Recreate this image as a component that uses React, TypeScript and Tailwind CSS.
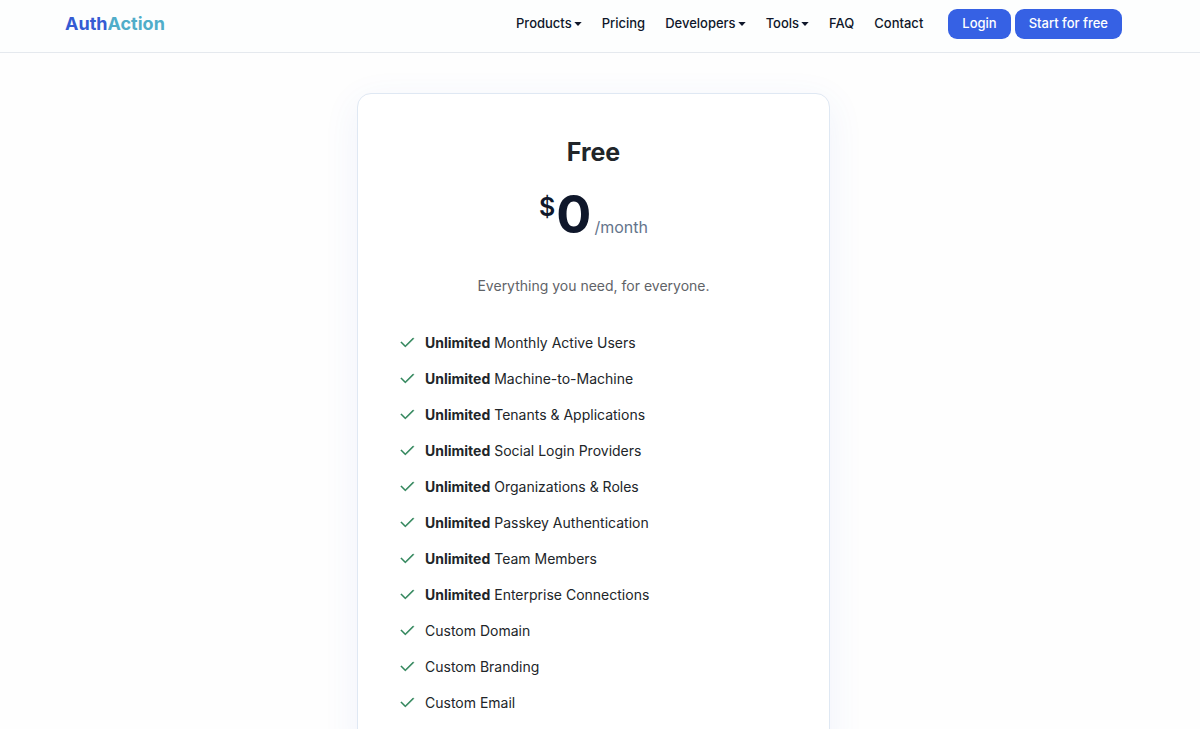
import { BsCheck2 } from "react-icons/bs";

type NavItem = {
  label: string;
  menu?: boolean;
};

type Feature = {
  text: string;
  unlimited?: boolean;
};

const navItems: NavItem[] = [
  { label: "Products", menu: true },
  { label: "Pricing" },
  { label: "Developers", menu: true },
  { label: "Tools", menu: true },
  { label: "FAQ" },
  { label: "Contact" },
];

const features: Feature[] = [
  { text: "Monthly Active Users", unlimited: true },
  { text: "Machine-to-Machine", unlimited: true },
  { text: "Tenants & Applications", unlimited: true },
  { text: "Social Login Providers", unlimited: true },
  { text: "Organizations & Roles", unlimited: true },
  { text: "Passkey Authentication", unlimited: true },
  { text: "Team Members", unlimited: true },
  { text: "Enterprise Connections", unlimited: true },
  { text: "Custom Domain" },
  { text: "Custom Branding" },
  { text: "Custom Email" },
];

function Caret() {
  return (
    <svg viewBox="0 0 8 4" className="h-1 w-2" fill="currentColor" aria-hidden="true">
      <path d="M0.3 0h7.4L4 4z" />
    </svg>
  );
}

function Header() {
  return (
    <header className="border-b border-[#e5e9ee] bg-[#fdfefe] pr-[13px]">
      <div className="mx-auto flex h-[52px] max-w-[1057px] items-center justify-between pb-1">
        <a href="#" className="text-lg font-bold text-[#355bd3]">
          Auth<span className="text-[#50adc9]">Action</span>
        </a>

        <div className="flex items-center gap-[25px]">
          <nav className="flex items-center gap-5 text-[13px] font-medium text-[#0f172a]">
            {navItems.map((item) =>
              item.menu ? (
                <button key={item.label} type="button" className="flex items-center gap-0.5">
                  {item.label}
                  <Caret />
                </button>
              ) : (
                <a key={item.label} href="#">
                  {item.label}
                </a>
              ),
            )}
          </nav>
          <div className="flex gap-1 text-[13px] font-medium text-white">
            <button type="button" className="h-[30px] rounded-[9px] bg-[#3661e4] px-[14px]">
              Login
            </button>
            <button type="button" className="h-[30px] rounded-[9px] bg-[#3661e4] px-[14px]">
              Start for free
            </button>
          </div>
        </div>
      </div>
    </header>
  );
}

function PricingCard() {
  return (
    <section className="w-full max-w-[473px] rounded-[14px] border border-[#dfe8f3] bg-white px-10 pt-[42px] pb-11 shadow-[0_9px_36px_rgba(59,100,220,0.08)]">
      <div className="text-center">
        <h2 className="text-[25px] leading-8 font-bold text-[#212529]">Free</h2>
        <div className="mt-[18px] flex h-16 items-baseline justify-center text-[#0f172a]">
          <span className="mr-px self-start text-[25px] leading-[42px] font-semibold">$</span>
          <span className="text-[52px] leading-[58px] font-bold">0</span>
          <span className="ml-[3px] text-base text-[#64748b]">/month</span>
        </div>
        <p className="mt-6 text-sm leading-6 text-[#5f6368]">Everything you need, for everyone.</p>
      </div>

      <ul className="mt-[33px] flex flex-col gap-3 text-sm leading-6 text-[#212529]">
        {features.map((feature) => (
          <li key={feature.text} className="flex items-center gap-[9px]">
            <BsCheck2
              className="size-[18px] shrink-0 text-[#2f855a]"
              strokeWidth={0.4}
              aria-hidden="true"
            />
            <span>
              {feature.unlimited && (
                <>
                  <strong className="font-bold">Unlimited</strong>{" "}
                </>
              )}
              {feature.text}
            </span>
          </li>
        ))}
      </ul>
    </section>
  );
}

export default function App() {
  return (
    <div className="min-h-screen bg-[#fefefe] font-['Inter',sans-serif]">
      <Header />
      <main className="flex justify-center pt-10 pr-[13px] pb-16">
        <PricingCard />
      </main>
    </div>
  );
}
